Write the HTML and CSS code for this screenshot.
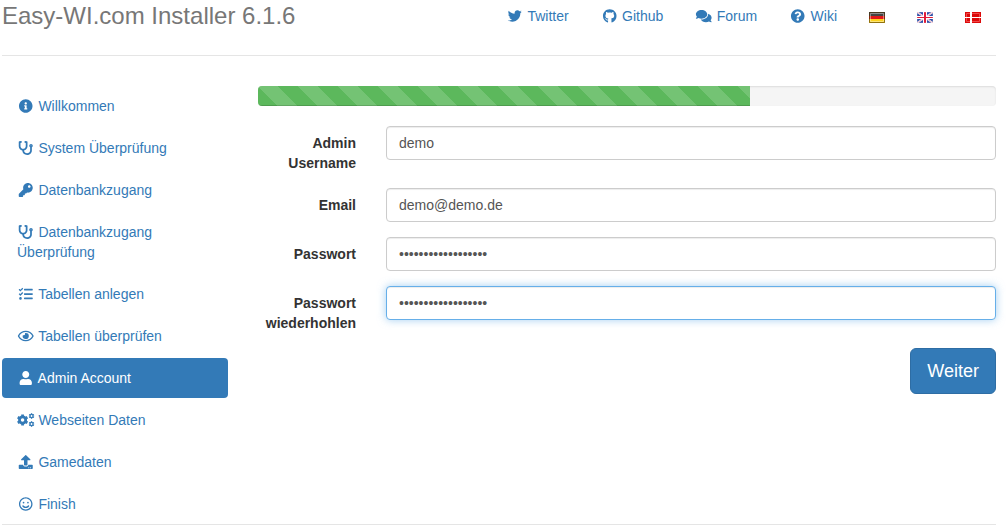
FILE: index.html
```html
<!DOCTYPE html>
<html lang="de">
<head>
<meta charset="utf-8">
<meta name="viewport" content="width=device-width, initial-scale=1">
<title>Easy-WI.com Installer 6.1.6</title>
<link rel="stylesheet" href="styles.css">
</head>
<body>
<div class="container">
  <header class="header">
    <h3 class="brand">Easy-WI.com Installer 6.1.6</h3>
    <nav aria-label="Links">
      <ul class="top-nav">
        <li><a href="#twitter"><svg class="icon" viewBox="0 0 512 512" aria-hidden="true"><path d="M459.37 151.716c.325 4.548.325 9.097.325 13.645 0 138.72-105.583 298.558-298.558 298.558-59.452 0-114.68-17.219-161.137-47.106 8.447.974 16.568 1.299 25.34 1.299 49.055 0 94.213-16.568 130.274-44.832-46.132-.975-84.792-31.188-98.112-72.772 6.498.974 12.995 1.624 19.818 1.624 9.421 0 18.843-1.3 27.614-3.573-48.081-9.747-84.143-51.98-84.143-102.985v-1.299c13.969 7.797 30.214 12.67 47.431 13.319-28.264-18.843-46.781-51.005-46.781-87.391 0-19.492 5.197-37.36 14.294-52.954 51.655 63.675 129.3 105.258 216.365 109.807-1.624-7.797-2.599-15.918-2.599-24.04 0-57.828 46.782-104.934 104.934-104.934 30.213 0 57.502 12.67 76.67 33.137 23.715-4.548 46.456-13.32 66.599-25.34-7.798 24.366-24.366 44.833-46.132 57.827 21.117-2.273 41.584-8.122 60.426-16.243-14.292 20.791-32.161 39.308-52.628 54.253z"/></svg> Twitter</a></li>
        <li><a href="#github"><svg class="icon" viewBox="0 0 496 512" aria-hidden="true"><path d="M244.8 8C106.1 8 0 113.3 0 252c0 110.9 69.8 205.8 169.5 239.2 12.8 2.3 17.3-5.6 17.3-12.1 0-6.2-.3-40.4-.3-61.4 0 0-70 15-84.7-29.8 0 0-11.4-29.1-27.8-36.6 0 0-22.9-15.7 1.6-15.4 0 0 24.9 2 38.6 25.8 21.9 38.6 58.6 27.5 72.9 20.9 2.3-16 8.8-27.1 16-33.7-55.9-6.2-112.3-14.3-112.3-110.5 0-27.5 7.6-41.3 23.6-58.9-2.6-6.5-11.1-33.3 2.6-67.9 20.9-6.5 69 27 69 27 20-5.6 41.5-8.5 62.8-8.5s42.8 2.9 62.8 8.5c0 0 48.1-33.6 69-27 13.7 34.7 5.2 61.4 2.6 67.9 16 17.7 25.8 31.5 25.8 58.9 0 96.5-58.9 104.2-114.8 110.5 9.2 7.9 17 22.9 17 46.4 0 33.7-.3 75.4-.3 83.6 0 6.5 4.6 14.4 17.3 12.1C428.2 457.8 496 362.9 496 252 496 113.3 383.5 8 244.8 8z"/></svg> Github</a></li>
        <li><a href="#forum"><svg class="icon" viewBox="0 0 576 512" aria-hidden="true"><path d="M416 192c0-88.4-93.1-160-208-160S0 103.6 0 192c0 34.3 14.1 65.9 38 92-13.4 30.2-35.5 54.2-35.8 54.5-2.2 2.3-2.8 5.7-1.5 8.7S4.8 352 8 352c36.6 0 66.9-12.3 88.7-25 32.2 15.7 70.3 25 111.3 25 114.9 0 208-71.6 208-160zm122 220c23.9-26 38-57.7 38-92 0-66.9-53.5-124.2-129.3-148.1.9 6.6 1.3 13.3 1.3 20.1 0 105.9-107.7 192-240 192-10.8 0-21.3-.8-31.7-1.9C207.8 439.6 281.8 480 368 480c41 0 79.1-9.2 111.3-25 21.8 12.7 52.1 25 88.7 25 3.2 0 6.1-1.9 7.3-4.8 1.3-2.9.7-6.3-1.5-8.7-.3-.3-22.4-24.2-35.8-54.5z"/></svg> Forum</a></li>
        <li><a href="#wiki"><svg class="icon" viewBox="0 0 512 512" aria-hidden="true"><path d="M504 256c0 136.997-111.043 248-248 248S8 392.997 8 256C8 119.083 119.043 8 256 8s248 111.083 248 248zM262.655 90c-54.497 0-89.255 22.957-116.549 63.758-3.536 5.286-2.353 12.415 2.715 16.258l34.699 26.31c5.205 3.947 12.621 3.008 16.665-2.122 17.864-22.658 30.113-35.797 57.303-35.797 20.429 0 45.698 13.148 45.698 32.958 0 14.976-12.363 22.667-32.534 33.976C247.128 238.528 216 254.941 216 296v4c0 6.627 5.373 12 12 12h56c6.627 0 12-5.373 12-12v-1.333c0-28.462 83.186-29.647 83.186-106.667 0-58.002-60.165-102-116.531-102zM256 338c-25.365 0-46 20.635-46 46 0 25.364 20.635 46 46 46s46-20.636 46-46c0-25.365-20.635-46-46-46z"/></svg> Wiki</a></li>
        <li><a href="#de" aria-label="Deutsch"><svg class="flag" viewBox="0 0 16 11" aria-hidden="true"><path fill="#444" d="M0 0h16v4H0z"/><path fill="#e01818" d="M0 4h16v3H0z"/><path fill="#fcd21c" d="M0 7h16v4H0z"/><path fill="none" stroke="#fff" stroke-opacity=".4" d="M1.500 1.500h13v8h-13z"/><path fill="none" stroke="#4a3208" stroke-opacity=".6" d="M.5.5h15v10H.5z"/></svg></a></li>
        <li><a href="#en" aria-label="English"><svg class="flag" viewBox="0 0 16 11" aria-hidden="true"><path fill="#2f4fa8" d="M0 0h16v11H0z"/><path stroke="#fff" stroke-width="1.700" d="M0 0l16 11M16 0L0 11"/><path stroke="#e0607a" stroke-width=".5" d="M0 0l16 11M16 0L0 11"/><path fill="#fff" d="M6 0h4v11H6zM0 4h16v3H0z"/><path fill="#e01c38" d="M7 0h2v11H7zM0 5h16v1H0z"/><path fill="none" stroke="#fff" stroke-opacity=".15" d="M.5.5h15v10H.5z"/></svg></a></li>
        <li><a href="#dk" aria-label="Dansk"><svg class="flag" viewBox="0 0 16 11" aria-hidden="true"><path fill="#dc0a0a" d="M0 0h16v11H0z"/><path fill="none" stroke="#f04a4a" d="M1.500 1.500h13v8h-13z"/><path fill="#fff" d="M5 0h2v11H5zM0 5h16v1H0z"/></svg></a></li>
      </ul>
    </nav>
  </header>

  <div class="row">
    <nav aria-label="Installation">
      <ul class="steps">
        <li><a href="#s1"><svg class="icon" viewBox="0 0 512 512" aria-hidden="true"><path d="M256 8C119.043 8 8 119.083 8 256c0 136.997 111.043 248 248 248s248-111.003 248-248C504 119.083 392.957 8 256 8zm0 110c23.196 0 42 18.804 42 42s-18.804 42-42 42-42-18.804-42-42 18.804-42 42-42zm56 254c0 6.627-5.373 12-12 12h-88c-6.627 0-12-5.373-12-12v-24c0-6.627 5.373-12 12-12h12v-64h-12c-6.627 0-12-5.373-12-12v-24c0-6.627 5.373-12 12-12h64c6.627 0 12 5.373 12 12v100h12c6.627 0 12 5.373 12 12v24z"/></svg> Willkommen</a></li>
        <li><a href="#s2"><svg class="icon" viewBox="0 0 512 512" aria-hidden="true"><path id="stethoscope" d="M447.1 112c-34.2.5-62.3 28.4-63 62.6-.5 24.3 12.5 45.6 32 56.8V344c0 57.3-50.2 104-112 104-60 0-109.2-44.1-111.9-99.2C265 333.8 320 269.2 320 192V36.6c0-11.4-8.1-21.3-19.3-23.5L237.8.5c-13-2.6-25.6 5.8-28.2 18.8L206.4 35c-2.6 13 5.8 25.6 18.8 28.2l30.7 6.1v121.4c0 52.9-42.2 96.7-95.1 97.2-53.4.5-96.9-42.7-96.9-96V69.4l30.7-6.1c13-2.6 21.4-15.2 18.8-28.2l-3.1-15.7C107.7 6.4 95.1-2 82.1.6L19.3 13C8.1 15.3 0 25.1 0 36.6V192c0 77.3 55.1 142 128.1 156.8C130.7 439.2 208.6 512 304 512c97 0 176-75.4 176-168V231.4c19.1-11.1 32-31.7 32-55.4 0-35.7-29.2-64.5-64.9-64zm.9 80c-8.8 0-16-7.2-16-16s7.2-16 16-16 16 7.2 16 16-7.2 16-16 16z"/></svg> System Überprüfung</a></li>
        <li><a href="#s3"><svg class="icon" viewBox="0 0 512 512" aria-hidden="true"><path d="M512 176.001C512 273.203 433.202 352 336 352c-11.22 0-22.19-1.062-32.827-3.069l-24.012 27.014A23.999 23.999 0 0 1 261.223 384H224v40c0 13.255-10.745 24-24 24h-40v40c0 13.255-10.745 24-24 24H24c-13.255 0-24-10.745-24-24v-78.059c0-6.365 2.529-12.47 7.029-16.971l161.802-161.802C163.108 213.814 160 195.271 160 176 160 78.798 238.797.001 335.999 0 433.488-.001 512 78.511 512 176.001zM336 128c0 26.51 21.49 48 48 48s48-21.490 48-48-21.490-48-48-48-48 21.490-48 48z"/></svg> Datenbankzugang</a></li>
        <li><a href="#s4"><svg class="icon" viewBox="0 0 512 512" aria-hidden="true"><use href="#stethoscope"/></svg> Datenbankzugang Überprüfung</a></li>
        <li><a href="#s5"><svg class="icon" viewBox="0 0 512 512" aria-hidden="true"><path d="M139.61 35.5a12 12 0 0 0-17 0L58.93 98.81l-22.7-22.12a12 12 0 0 0-17 0L3.53 92.41a12 12 0 0 0 0 17l47.59 47.4a12.78 12.78 0 0 0 17.61 0l15.59-15.62L156.52 69a12.09 12.09 0 0 0 .09-17zm0 159.19a12 12 0 0 0-17 0l-63.68 63.72-22.7-22.1a12 12 0 0 0-17 0L3.53 252a12 12 0 0 0 0 17L51 316.5a12.77 12.77 0 0 0 17.6 0l15.7-15.69 72.2-72.22a12 12 0 0 0 .09-16.9zM64 368c-26.49 0-48.59 21.5-48.59 48S37.53 464 64 464a48 48 0 0 0 0-96zm432 16H208a16 16 0 0 0-16 16v32a16 16 0 0 0 16 16h288a16 16 0 0 0 16-16v-32a16 16 0 0 0-16-16zm0-320H208a16 16 0 0 0-16 16v32a16 16 0 0 0 16 16h288a16 16 0 0 0 16-16V80a16 16 0 0 0-16-16zm0 160H208a16 16 0 0 0-16 16v32a16 16 0 0 0 16 16h288a16 16 0 0 0 16-16v-32a16 16 0 0 0-16-16z"/></svg> Tabellen anlegen</a></li>
        <li><a href="#s6"><svg class="icon" viewBox="0 0 576 512" aria-hidden="true"><path d="M288 144a110.94 110.94 0 0 0-31.24 5 55.4 55.4 0 0 1 7.24 27 56 56 0 0 1-56 56 55.4 55.4 0 0 1-27-7.24A111.71 111.71 0 1 0 288 144zm284.52 97.4C518.29 135.59 410.93 64 288 64S57.68 135.64 3.48 241.41a32.35 32.35 0 0 0 0 29.19C57.71 376.41 165.07 448 288 448s230.32-71.64 284.52-177.41a32.35 32.35 0 0 0 0-29.19zM288 400c-98.65 0-189.09-55-237.93-144C98.91 167 189.34 112 288 112s189.09 55 237.93 144C477.1 345 386.66 400 288 400z"/></svg> Tabellen überprüfen</a></li>
        <li><a class="active" href="#s7" aria-current="step"><svg class="icon" viewBox="0 0 448 512" aria-hidden="true"><path d="M224 256c70.7 0 128-57.3 128-128S294.7 0 224 0 96 57.3 96 128s57.3 128 128 128zm89.6 32h-16.7c-22.2 10.2-46.9 16-72.9 16s-50.6-5.8-72.9-16h-16.7C60.2 288 0 348.2 0 422.4V464c0 26.5 21.5 48 48 48h352c26.5 0 48-21.5 48-48v-41.6c0-74.2-60.2-134.4-134.4-134.4z"/></svg> Admin Account</a></li>
        <li><a href="#s8"><svg class="icon" viewBox="0 0 640 512" aria-hidden="true"><g fill="none" stroke="currentColor"><circle cx="204" cy="256" r="115" stroke-width="100"/><path stroke-width="100" d="M204 52v70M204 390v70M27 154l60 35M321 323l60 35M27 358l60-35M321 189l60-35"/><circle cx="532" cy="110" r="58" stroke-width="50"/><path stroke-width="48" d="M532 6v34M532 180v34M442 58l30 17M592 145l30 17M442 162l30-17M592 75l30-17"/><circle cx="532" cy="402" r="58" stroke-width="50"/><path stroke-width="48" d="M532 298v34M532 472v34M442 350l30 17M592 437l30 17M442 454l30-17M592 367l30-17"/></g></svg> Webseiten Daten</a></li>
        <li><a href="#s9"><svg class="icon" viewBox="0 0 512 512" aria-hidden="true"><path d="M296 384h-80c-13.3 0-24-10.7-24-24V192h-87.7c-17.8 0-26.7-21.5-14.1-34.1L242.3 5.700c7.5-7.5 19.8-7.5 27.3 0l152.2 152.2c12.6 12.6 3.7 34.1-14.1 34.1H320v168c0 13.3-10.7 24-24 24zm216-8v112c0 13.3-10.7 24-24 24H24c-13.3 0-24-10.7-24-24V376c0-13.3 10.7-24 24-24h136v8c0 30.9 25.1 56 56 56h80c30.9 0 56-25.1 56-56v-8h136c13.3 0 24 10.7 24 24zm-124 88c0-11-9-20-20-20s-20 9-20 20 9 20 20 20 20-9 20-20zm64 0c0-11-9-20-20-20s-20 9-20 20 9 20 20 20 20-9 20-20z"/></svg> Gamedaten</a></li>
        <li><a href="#s10"><svg class="icon" viewBox="0 0 496 512" aria-hidden="true"><path d="M248 8C111 8 0 119 0 256s111 248 248 248 248-111 248-248S385 8 248 8zm0 448c-110.3 0-200-89.7-200-200S137.700 56 248 56s200 89.7 200 200-89.7 200-200 200zm-80-216c17.7 0 32-14.3 32-32s-14.3-32-32-32-32 14.3-32 32 14.3 32 32 32zm160 0c17.7 0 32-14.3 32-32s-14.3-32-32-32-32 14.3-32 32 14.3 32 32 32zm4 72.6c-20.8 25-51.5 39.4-84 39.4s-63.2-14.3-84-39.4c-8.5-10.2-23.7-11.5-33.8-3.1-10.2 8.5-11.5 23.6-3.1 33.8 30 36 74.1 56.6 120.9 56.6s90.9-20.6 120.9-56.6c8.5-10.2 7.1-25.3-3.1-33.8-10.1-8.4-25.3-7.1-33.8 3.1z"/></svg> Finish</a></li>
      </ul>
    </nav>

    <main>
      <div class="progress" role="progressbar" aria-label="Fortschritt" aria-valuemin="0" aria-valuemax="9" aria-valuenow="6">
        <div class="progress-bar" style="width: 66.67%"></div>
      </div>
      <form class="form">
        <div class="form-group">
          <label for="username">Admin Username</label>
          <input class="form-control" id="username" type="text" value="demo">
        </div>
        <div class="form-group">
          <label for="email">Email</label>
          <input class="form-control" id="email" type="email" value="demo@demo.de">
        </div>
        <div class="form-group">
          <label for="password">Passwort</label>
          <input class="form-control" id="password" type="password" value="demodemodemodemode">
        </div>
        <div class="form-group">
          <label for="password2">Passwort wiederhohlen</label>
          <input class="form-control focused" id="password2" type="password" value="demodemodemodemode">
        </div>
        <button class="btn" type="submit">Weiter</button>
      </form>
    </main>
  </div>
</div>
</body>
</html>
```
FILE: styles.css
```css
* {
  box-sizing: border-box;
}

body {
  margin: 0;
  background: #fff;
  color: #333;
  font: 14px/20px "Liberation Sans", Arial, sans-serif;
}

ul {
  margin: 0;
  padding: 0;
  list-style: none;
}

a {
  color: #337ab7;
  text-decoration: none;
}

.container {
  padding: 0 12px 0 2px;
}

.header {
  display: flex;
  justify-content: space-between;
  align-items: flex-start;
  height: 56px;
  margin-bottom: 30px;
  border-bottom: 1px solid #e5e5e5;
}

.brand {
  margin: 0;
  padding-top: 3px;
  color: #777;
  font-size: 24px;
  font-weight: 400;
  line-height: 26px;
}

.top-nav {
  display: flex;
  gap: 2px;
}

.top-nav a {
  display: block;
  padding: 6px 15px 10px;
}

.icon {
  width: 1.25em;
  height: 1em;
  vertical-align: -2px;
  fill: currentColor;
}

.flag {
  width: 16px;
  height: 11px;
  vertical-align: -2px;
}

.row {
  display: grid;
  grid-template-columns: minmax(0, 226fr) minmax(0, 738fr);
  gap: 30px;
  border-bottom: 1px solid #e5e5e5;
}

.steps {
  display: flex;
  flex-direction: column;
  gap: 2px;
}

.steps a {
  display: block;
  padding: 10px 15px;
  border-radius: 4px;
}

.steps .active {
  background: #337ab7;
  color: #fff;
}

.progress {
  height: 20px;
  margin-bottom: 20px;
  overflow: hidden;
  border-radius: 4px;
  background: #f5f5f5;
  box-shadow: inset 0 1px 2px rgba(0, 0, 0, .1);
}

.progress-bar {
  height: 100%;
  background-color: #5cb85c;
  background-image: linear-gradient(45deg, rgba(255, 255, 255, .15) 25%, transparent 25%, transparent 50%, rgba(255, 255, 255, .15) 50%, rgba(255, 255, 255, .15) 75%, transparent 75%, transparent);
  background-size: 40px 40px;
  box-shadow: inset 0 -1px 0 rgba(0, 0, 0, .15);
}

.form {
  display: flex;
  flex-direction: column;
  gap: 15px;
}

.form-group {
  display: grid;
  grid-template-columns: minmax(0, 98fr) minmax(0, 610fr);
  gap: 30px;
  align-items: start;
}

.form-group label {
  padding-top: 7px;
  font-weight: 700;
  text-align: right;
}

.form-control {
  width: 100%;
  height: 34px;
  padding: 6px 12px;
  border: 1px solid #ccc;
  border-radius: 4px;
  background: #fff;
  box-shadow: inset 0 1px 1px rgba(0, 0, 0, .075);
  color: #555;
  font: inherit;
}

.form-control:focus,
.form-control.focused {
  border-color: #66afe9;
  outline: 0;
  box-shadow: inset 0 1px 1px rgba(0, 0, 0, .075), 0 0 8px rgba(102, 175, 233, .6);
}

.btn {
  align-self: flex-end;
  padding: 10px 16px;
  border: 1px solid #2e6da4;
  border-radius: 6px;
  background: #337ab7;
  color: #fff;
  font: 18px/24px "Liberation Sans", Arial, sans-serif;
  cursor: pointer;
}
```
